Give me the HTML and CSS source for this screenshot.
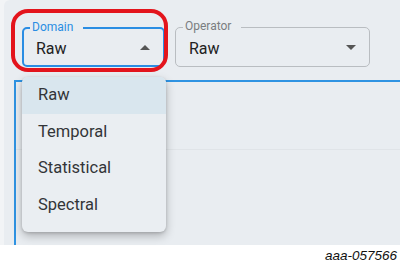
FILE: index.html
```html
<!DOCTYPE html>
<html lang="en">

<head>
    <meta charset="UTF-8">
    <meta name="viewport" content="width=device-width, initial-scale=1.0">
    <title>Domain select</title>

    <link rel="stylesheet" href="styles.css">
</head>

<body>
    <div class="page">
        <div class="panel">
            <div class="fields">
                <div class="field field-focus">
                    <span class="field-label">Domain</span>
                    <span class="field-value">Raw</span>
                    <svg class="caret" width="10" height="5" viewBox="0 0 10 5"><path d="M0 5 L5 0 L10 5 Z" /></svg>
                </div>
                <div class="field field-operator">
                    <span class="field-label">Operator</span>
                    <span class="field-value">Raw</span>
                    <svg class="caret" width="10" height="5" viewBox="0 0 10 5"><path d="M0 0 L10 0 L5 5 Z" /></svg>
                </div>
            </div>

            <div class="table">
                <div class="table-row"></div>
            </div>

            <div class="highlight-ring"></div>

            <ul class="menu">
                <li class="menu-item selected">Raw</li>
                <li class="menu-item">Temporal</li>
                <li class="menu-item">Statistical</li>
                <li class="menu-item">Spectral</li>
            </ul>
        </div>
    </div>
    <div class="footer">aaa-057566</div>
</body>
</html>
```

FILE: styles.css
```css
body { margin: 0; background-color: #ffffff; font-family: Roboto, "Liberation Sans", sans-serif; }

.page {
    height: 245px;
    background-color: #f2f4f6;
    padding-left: 4px;
    box-sizing: border-box;
}

.panel {
    position: relative;
    height: 100%;
    background-color: #e9edf1;
    border-top-left-radius: 6px;
    padding-top: 27px;
    box-sizing: border-box;
    display: flex;
    flex-direction: column;
}

.fields {
    display: flex;
    gap: 10px;
    padding-left: 18px;
}

.field {
    position: relative;
    height: 40px;
    border: 1px solid #b9bdc1;
    border-radius: 5px;
    box-sizing: border-box;
    display: flex;
    align-items: center;
    justify-content: space-between;
    padding: 0 13px 0 13px;
}
.field-focus { width: 143px; border: 2px solid #2a8de3; padding: 0 13px 0 12px; }
.field-operator { width: 195px; }

.field-label {
    position: absolute;
    top: -9px;
    left: 7px;
    padding: 0 10px 0 2px;
    background-color: #e9edf1;
    font-size: 12px;
    line-height: 14px;
    color: #7a7d80;
}
.field-focus .field-label { left: 6px; color: #2a8de3; }

.field-value { font-size: 16px; color: #222222; padding-top: 2px; }
.caret { fill: #555555; }

.table {
    flex: 1;
    margin: 13px 0 0 10px;
    border-top: 2px solid #2f93e2;
    border-left: 2px solid #2f93e2;
}
.table-row { height: 67px; border-bottom: 1px solid #e0e4e8; }

.highlight-ring {
    position: absolute;
    left: 7px;
    top: 9px;
    width: 157px;
    height: 63px;
    border: 4px solid #e3141c;
    border-radius: 17px;
    box-sizing: border-box;
}

.menu {
    position: absolute;
    left: 18px;
    top: 77px;
    width: 144px;
    margin: 0;
    padding: 0 0 9px 0;
    list-style: none;
    background-color: #eaeef2;
    border-radius: 6px;
    overflow: hidden;
    box-shadow: 0 4px 10px rgba(0, 0, 0, 0.25), 0 1px 3px rgba(0, 0, 0, 0.15);
}
.menu-item {
    height: 36.5px;
    line-height: 36.5px;
    padding-left: 16px;
    font-size: 16.5px;
    color: #333538;
}
.menu-item.selected { background-color: #d9e6ee; }

.footer {
    height: 24px;
    text-align: right;
    padding-right: 3px;
    font-family: "Liberation Sans", Arial, sans-serif;
    font-style: italic;
    font-size: 13.5px;
    line-height: 22px;
    color: #111111;
}
```
